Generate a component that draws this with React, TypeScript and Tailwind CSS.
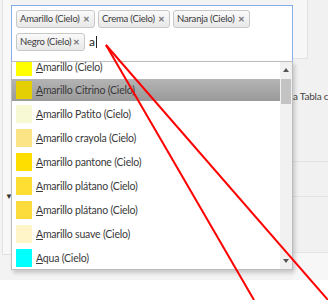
import React from 'react';

type Item = { name: string; color: string; active?: boolean };

const items: Item[] = [
  { name: 'Amarillo (Cielo)', color: '#ffff00' },
  { name: 'Amarillo Citrino (Cielo)', color: '#e4cf05', active: true },
  { name: 'Amarillo Patito (Cielo)', color: '#f7f8d4' },
  { name: 'Amarillo crayola (Cielo)', color: '#fbe486' },
  { name: 'Amarillo pantone (Cielo)', color: '#fedd00' },
  { name: 'Amarillo plátano (Cielo)', color: '#fede33' },
  { name: 'Amarillo plátano (Cielo)', color: '#fbdc3c' },
  { name: 'Amarillo suave (Cielo)', color: '#fff5c9' },
  { name: 'Aqua (Cielo)', color: '#00ffff' },
];

const tags: { label: string; w: string }[] = [
  { label: 'Amarillo (Cielo)', w: 'w-[79px]' },
  { label: 'Crema (Cielo)', w: 'w-[72px]' },
  { label: 'Naranja (Cielo)', w: 'w-[77px]' },
  { label: 'Negro (Cielo)', w: 'w-[69px]' },
];

function Tag({ label, w }: { label: string; w: string }) {
  return (
    <div
      className={
        'flex h-[18px] shrink-0 items-center justify-between rounded-[3px] border border-[#c8c8c8] bg-gradient-to-b from-[#fafafa] to-[#e8e8e8] pl-[3px] pr-[4px] text-[9.5px] leading-none tracking-[-0.2px] text-[#3a3a3a] ' +
        w
      }
    >
      <span className="whitespace-nowrap">{label}</span>
      <span className="text-[8px] font-bold text-[#777]">✕</span>
    </div>
  );
}

function Row({ item, first }: { item: Item; first?: boolean }) {
  return (
    <div className={'flex flex-col justify-center ' + (first ? 'h-[22px]' : 'h-[24px]')}>
      <div
        className={
          'flex h-[22px] items-center pl-[4px] ' +
          (item.active ? 'bg-gradient-to-b from-[#b4b4b4] to-[#9a9a9a]' : '')
        }
      >
        <div className="h-[18px] w-[16px] shrink-0" style={{ backgroundColor: item.color }} />
        <span className="ml-[4px] whitespace-nowrap text-[10.5px] leading-none tracking-[-0.2px] text-[#3a3a3a]">
          <span className="underline">{item.name[0]}</span>
          {item.name.slice(1)}
        </span>
      </div>
    </div>
  );
}

export default function App() {
  return (
    <div className="relative h-[300px] w-[328px] overflow-hidden bg-white font-['Lato','Liberation_Sans',sans-serif]">
      <div className="flex h-[280px] bg-[#f3f3f3]">
        {/* left strip */}
        <div className="w-[11px] shrink-0">
          <div className="ml-[2px] flex h-[255px] flex-col border-b border-l border-[#e2e2e2] bg-[#f8f8f8]">
            <div className="mt-[192px] pl-[2px] text-[8px] leading-none text-[#333]">▼</div>
          </div>
        </div>

        {/* main column */}
        <div className="w-[282px] shrink-0 pt-[5px]">
          <div className="relative">
            <div className="h-[57px] border border-[#86aeea] bg-white pl-[4px] pt-[4px]">
              <div className="flex flex-wrap items-center gap-x-[3px] gap-y-[5px]">
                {tags.map((t) => (
                  <Tag key={t.label} label={t.label} w={t.w} />
                ))}
                <div className="ml-[1px] flex items-center text-[12px] leading-none text-[#222]">
                  a<span className="ml-px inline-block h-[12px] w-px bg-[#222]" />
                </div>
              </div>
            </div>

            {/* dropdown */}
            <div className="absolute left-0 top-[56px] flex h-[209px] w-[282px] border border-[#bdbdbd] bg-white shadow-[2px_3px_4px_rgba(0,0,0,0.18)]">
              <div className="flex-1 overflow-hidden">
                <div className="-mt-[6px] flex flex-col">
                  {items.map((it, i) => (
                    <Row key={i} item={it} first={i === 0} />
                  ))}
                </div>
              </div>
              <div className="flex w-[12px] flex-col items-center bg-[#f1f1f1]">
                <div className="mt-[6px] h-0 w-0 border-x-[3px] border-b-[4px] border-x-transparent border-b-[#555]" />
                <div className="mt-[7px] h-[25px] w-[10px] bg-[#c3c3c3]" />
                <div className="flex-1" />
                <div className="mb-[6px] h-0 w-0 border-x-[3px] border-t-[4px] border-x-transparent border-t-[#555]" />
              </div>
            </div>
          </div>
        </div>

        {/* right column */}
        <div className="flex min-w-0 flex-1 flex-col overflow-hidden bg-[#f1f1f1]">
          <div className="flex h-[59px]">
            <div className="w-[15px] border-b border-r border-[#e2e2e2] bg-[#f7f7f7]" />
          </div>
          <div className="h-[103px] border-b border-[#e4e4e4]">
            <div className="mt-[32px] whitespace-nowrap text-[10px] leading-none tracking-[-0.2px] text-[#444]">a Tabla co</div>
          </div>
          <div className="h-[35px] border-b border-[#e4e4e4]" />
          <div className="h-[56px] border-b border-[#e4e4e4]" />
          <div className="flex-1 bg-[#f7f7f7]" />
        </div>
      </div>

      <svg className="pointer-events-none absolute inset-0" width="328" height="300">
        <line x1="106" y1="45" x2="254" y2="300" stroke="#ff0000" strokeWidth="2" />
        <line x1="106" y1="45" x2="328" y2="300" stroke="#ff0000" strokeWidth="2" />
      </svg>
    </div>
  );
}
